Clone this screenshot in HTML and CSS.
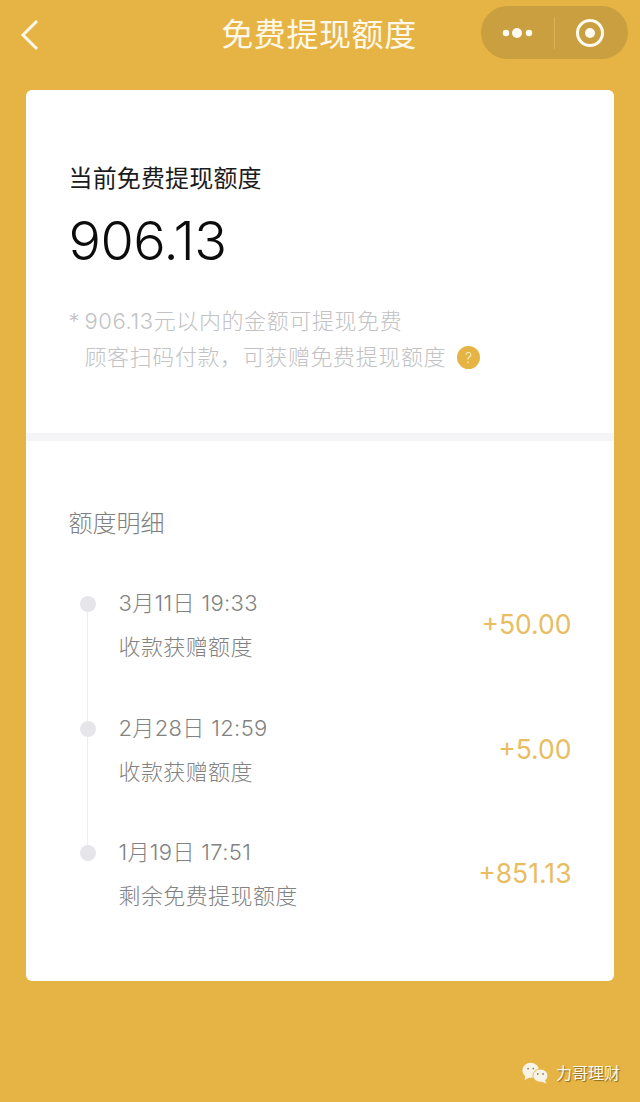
FILE: index.html
```html
<!DOCTYPE html>
<html lang="zh-CN">
<head>
<meta charset="utf-8">
<title>免费提现额度</title>
<link rel="stylesheet" href="styles.css">
</head>
<body>
<div class="page">
  <header class="nav">
    <svg class="back" width="20" height="32" viewBox="0 0 20 32"><path d="M17 2 L3 16 L17 30" fill="none" stroke="#fff8e8" stroke-width="3"/></svg>
    <h1 class="nav-title">免费提现额度</h1>
    <div class="capsule">
      <svg class="cap-more" width="34" height="14" viewBox="0 0 34 14"><circle cx="5" cy="7" r="3.2" fill="#fffbf2"/><circle cx="16" cy="7" r="5" fill="#fffbf2"/><circle cx="28" cy="7" r="3.2" fill="#fffbf2"/></svg>
      <span class="cap-line"></span>
      <svg class="cap-close" width="30" height="30" viewBox="0 0 30 30"><circle cx="15" cy="15" r="12.5" fill="none" stroke="#fffbf0" stroke-width="3"/><circle cx="15" cy="15" r="5" fill="#fffbf2"/></svg>
    </div>
  </header>
  <main class="card">
    <section class="summary">
      <div class="sum-label">当前免费提现额度</div>
      <div class="sum-value">906.13</div>
      <div class="note">
        <div class="note-line"><span class="star">*</span>906.13元以内的金额可提现免费</div>
        <div class="note-line note-indent">顾客扫码付款，可获赠免费提现额度<span class="help">?</span></div>
      </div>
    </section>
    <div class="divider"></div>
    <section class="detail">
      <div class="detail-title">额度明细</div>
      <ul class="timeline">
        <li class="item">
          <div class="item-text"><div class="date">3月11日 19:33</div><div class="desc">收款获赠额度</div></div>
          <div class="amount">+50.00</div>
        </li>
        <li class="item">
          <div class="item-text"><div class="date">2月28日 12:59</div><div class="desc">收款获赠额度</div></div>
          <div class="amount">+5.00</div>
        </li>
        <li class="item item-last">
          <div class="item-text"><div class="date">1月19日 17:51</div><div class="desc">剩余免费提现额度</div></div>
          <div class="amount">+851.13</div>
        </li>
      </ul>
    </section>
  </main>
  <div class="mark">
    <svg width="30" height="26" viewBox="0 0 34 26"><ellipse cx="11" cy="10" rx="9.5" ry="8.5" fill="#f7f3e6"/><path d="M5 16 L4 21 L10 18 Z" fill="#f7f3e6"/><ellipse cx="22" cy="16" rx="8.5" ry="7.5" fill="#f7f3e6" stroke="#e5b444" stroke-width="1"/><path d="M27 21 L29 25 L23 23 Z" fill="#f7f3e6"/><circle cx="8" cy="8" r="1" fill="#8a7a50"/><circle cx="14" cy="8" r="1" fill="#8a7a50"/><circle cx="19" cy="14" r="1" fill="#8a7a50"/><circle cx="25" cy="14" r="1" fill="#8a7a50"/></svg>
    <span class="mark-text">力哥理财</span>
  </div>
</div>
</body>
</html>
```
FILE: styles.css
```css
* { box-sizing: border-box; }
html, body { margin: 0; padding: 0; }
body { font-family: "Inter", "Noto Sans CJK SC", sans-serif; font-weight: 300; }
.page { width: 640px; height: 1102px; background: #e5b444; display: flex; flex-direction: column; overflow: hidden; }
.nav { position: relative; height: 90px; flex: none; }
.back { position: absolute; left: 20px; top: 19px; }
.nav-title { margin: 0; position: absolute; left: 0; width: 640px; top: 15px; text-align: center; font-size: 32px; line-height: 40px; font-weight: 400; color: #fff8e8; letter-spacing: 0.6px; transform: translateX(-1px); }
.capsule { position: absolute; left: 481px; top: 6px; width: 147px; height: 53px; border-radius: 27px; background: #c99f3f; display: flex; align-items: center; }
.cap-more { margin-left: 20px; }
.cap-line { width: 1px; height: 32px; margin-left: 19px; background: #d9b35c; }
.cap-close { margin-left: 20px; }
.card { margin: 0 26px; height: 891px; flex: none; background: #fff; border-radius: 6px; overflow: hidden; }
.summary { height: 343px; padding: 71px 0 0 42.5px; }
.sum-label { font-size: 24px; line-height: 36px; letter-spacing: 0.15px; font-weight: 400; color: #1c1c1c; }
.sum-value { margin-top: 14px; font-size: 54px; line-height: 60px; letter-spacing: -0.5px; color: #0c0c0c; }
.note { margin-top: 32px; font-size: 22px; line-height: 36px; letter-spacing: 0.6px; color: #c2c2c4; }
.note-line { display: flex; align-items: center; white-space: pre; }
.star { width: 16px; }
.note-indent { padding-left: 16px; }
.help { width: 23px; height: 23px; margin-left: 11px; border-radius: 50%; background: #e5b444; color: #fbeccb; font-size: 14px; line-height: 23px; text-align: center; letter-spacing: 0; }
.divider { height: 8px; background: #f5f5f8; }
.detail { padding: 69px 0 0 42.5px; }
.detail-title { font-size: 24px; line-height: 28px; color: #808080; }
.timeline { list-style: none; margin: 46px 0 0; padding: 0; }
.item { position: relative; height: 124.5px; padding: 0 42.5px 0 50px; display: flex; justify-content: space-between; }
.item::before { content: ""; position: absolute; left: 11px; top: 12px; width: 16px; height: 16px; border-radius: 50%; background: #e6e6ea; }
.item::after { content: ""; position: absolute; left: 18px; top: 28px; width: 1px; height: 109px; background: #eeeef1; }
.item-last::after { display: none; }
.date { margin-top: 1px; font-size: 22px; line-height: 36px; letter-spacing: 0.35px; color: #828282; }
.desc { margin-top: 8px; font-size: 22px; line-height: 36px; letter-spacing: 0.4px; color: #828282; }
.amount { margin-top: 22px; font-size: 26.5px; line-height: 36px; font-weight: 400; color: #e8bd62; }
.mark { flex: none; margin-top: 79px; padding-right: 20px; display: flex; justify-content: flex-end; align-items: center; gap: 5px; height: 26px; }
.mark-text { font-size: 16px; line-height: 20px; font-weight: 400; color: #fff8e8; text-shadow: 1px 1px 1px #8a6a20; }
```
